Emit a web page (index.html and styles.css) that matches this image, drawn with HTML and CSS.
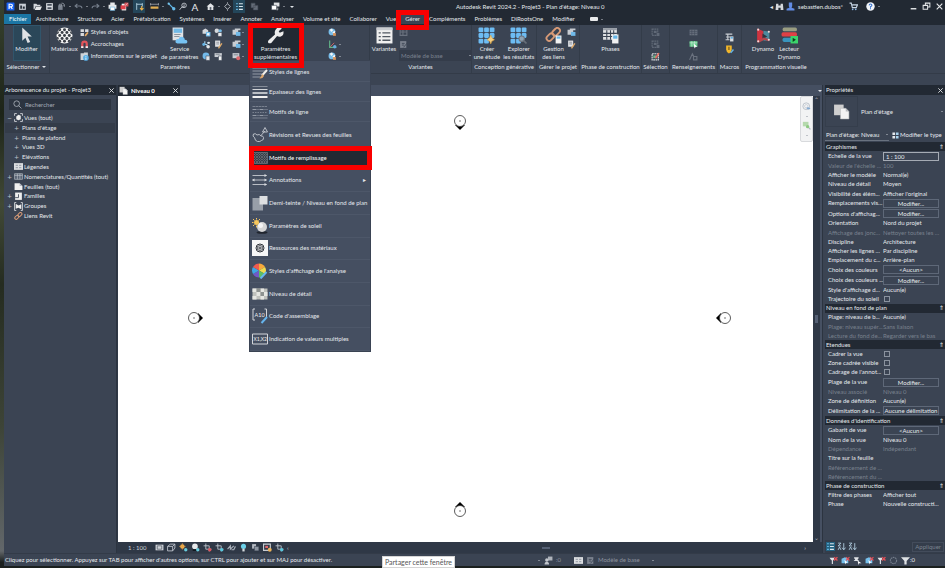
FILE: index.html
```html
<!DOCTYPE html>
<html lang="fr">
<head>
<meta charset="utf-8">
<title>Autodesk Revit 2024.2 - Projet3</title>
<link rel="stylesheet" href="styles.css">
</head>
<body>
<svg class="defs" aria-hidden="true">
  <symbol id="r" viewBox="0 0 16 16"><rect x="1" y="1" width="14" height="14" rx="1" fill="#1763f5"/><path d="M5.500 12.500V4h3.500a2.300 2.300 0 0 1 0 4.700H6M8.700 8.700l2.500 3.800" fill="none" stroke="#fff" stroke-width="2"/></symbol>
  <symbol id="win" viewBox="0 0 16 16"><path d="M2 3h12v11H2z" fill="#c9ced6"/><path d="M4 6h3v6H4zM8.500 8h3.500v4H8.500z" fill="#262e39"/></symbol>
  <symbol id="open" viewBox="0 0 16 16"><path d="M1 3h5l1.500 2H13v2H5l-2.500 6H1z" fill="#d4d7dc"/><path d="M5.500 8H16l-3 6H3z" fill="#e8e9eb"/></symbol>
  <symbol id="save" viewBox="0 0 16 16"><path d="M2 2h12v12H2z" fill="#d9dce0"/><path d="M4 3.500h8v3H4zM4.500 9.500h7v3h-7z" fill="#48505d"/></symbol>
  <symbol id="sync" viewBox="0 0 16 16"><path d="M2 6h8v8H2z" fill="#7a828e"/><path d="M8 2c4 0 6 2 5 6M13 8l-2-2M4 4h4v3H4z" stroke="#9299a4" stroke-width="1.500" fill="none"/></symbol>
  <symbol id="undo" viewBox="0 0 16 16"><path d="M3 7h7q4 0 4 4M6 3.500L2 7l4 3.500" fill="none" stroke="#747d8a" stroke-width="2"/></symbol>
  <symbol id="redo" viewBox="0 0 16 16"><path d="M13 7H6q-4 0-4 4M10 3.500L14 7l-4 3.500" fill="none" stroke="#747d8a" stroke-width="2"/></symbol>
  <symbol id="print" viewBox="0 0 16 16"><path d="M4 1h8v4H4zM1 5h14v7H1z" fill="#e6e8ea"/><path d="M4 9h8v6H4z" fill="#fff" stroke="#59a9dc"/></symbol>
  <symbol id="pdf" viewBox="0 0 16 16"><path d="M3 3h8v12H3z" fill="#f1f1f1"/><path d="M1 6h9v7H1z" fill="#e0404a"/><path d="M8 1h7v7H8z" fill="#d4525a"/><path d="M9.500 6l4-3.500" stroke="#fff"/></symbol>
  <symbol id="dim" viewBox="0 0 16 16"><path d="M3 2v12M13 2v6M3 4h10" fill="none" stroke="#b9d8e9" stroke-width="1.500"/><path d="M12 7v7M9 11l3 3 3-3" stroke="#f0b44c" stroke-width="2" fill="none"/></symbol>
  <symbol id="rule" viewBox="0 0 16 16"><path d="M1 4h14M1 2v4M15 2v4" stroke="#d7dadf"/><path d="M1 8h14v4H1z" fill="#e2ae53"/></symbol>
  <symbol id="tag" viewBox="0 0 16 16"><path d="M3 3l9 9" stroke="#60b7e6" stroke-width="2"/><circle cx="3" cy="3" r="2" fill="#79c7ef"/><circle cx="12" cy="12" r="3" fill="#68b9e7"/></symbol>
  <symbol id="pin" viewBox="0 0 16 16"><circle cx="9" cy="6" r="4" fill="none" stroke="#c8cdd4" stroke-width="1.500"/><path d="M9 4v5H5l-4 5" fill="none" stroke="#c8cdd4" stroke-width="1.500"/></symbol>
  <symbol id="house" viewBox="0 0 16 16"><path d="M1 8l7-6 7 6h-2v6H3V8z" fill="#e3e5e8"/><path d="M6.500 9h3v5h-3z" fill="#59616e"/></symbol>
  <symbol id="dia" viewBox="0 0 16 16"><path d="M8 3l5 5-5 5-5-5z" fill="none" stroke="#c8cdd4" stroke-width="1.500"/><path d="M8 0v3M8 13v3" stroke="#c8cdd4"/></symbol>
  <symbol id="lines" viewBox="0 0 16 16"><path d="M2 3h3M2 8h3M2 13h3" stroke="#69bce9" stroke-width="2"/><path d="M7 3h7M7 8h7M7 13h7" stroke="#d9e5ec" stroke-width="2"/></symbol>
  <symbol id="close2" viewBox="0 0 16 16"><path d="M2 2h7v8H2zM6 6h8v8H6z" fill="#646c78" stroke="#454d59"/></symbol>
  <symbol id="copy" viewBox="0 0 16 16"><path d="M2 2h7v8H2z" fill="#b9bec6"/><path d="M6 6h8v8H6z" fill="#8e96a2" stroke="#2f3846"/></symbol>
  <symbol id="wins" viewBox="0 0 16 16"><path d="M5 1h10v7H5z" fill="#dfe1e4"/><path d="M1 6h9v8H1z" fill="#fff" stroke="#38404c"/><path d="M12 10v4h-2" stroke="#fff" fill="none"/></symbol>
  <symbol id="bino" viewBox="0 0 16 16"><path d="M2 3h4v3h4V3h4l1 11h-5v-4H6v4H1z" fill="#d4d7dc"/></symbol>
  <symbol id="user" viewBox="0 0 16 16"><path d="M5 1h6v6l-1 3 5 2v3H1v-3l5-2-1-3z" fill="#628ce4"/></symbol>
  <symbol id="cart" viewBox="0 0 16 16"><path d="M1 2h3l2 8h7l2-5H5" fill="none" stroke="#c8d7e7" stroke-width="2"/><circle cx="6.500" cy="13" r="1.500" fill="#8cb6e4"/><circle cx="12" cy="13" r="1.500" fill="#8cb6e4"/></symbol>
  <symbol id="help" viewBox="0 0 16 16"><circle cx="8" cy="8" r="7.500" fill="#f0f4fa"/><path d="M5.500 6Q6 3.500 8 3.500t2.500 2.200Q10.500 7 8 8.500V10M8 11v2" fill="none" stroke="#2e6ccb" stroke-width="1.800"/></symbol>
  <symbol id="min" viewBox="0 0 16 16"><path d="M3 12h10" stroke="#e5e7e9" stroke-width="2.500"/></symbol>
  <symbol id="max" viewBox="0 0 16 16"><path d="M6 6V2h8v7h-4M2 6h8v7H2z" fill="none" stroke="#e5e7e9" stroke-width="1.800"/></symbol>
  <symbol id="x" viewBox="0 0 16 16"><path d="M3 3l10 10M13 3L3 13" stroke="#e5e7e9" stroke-width="2"/></symbol>
  <symbol id="cursor" viewBox="0 0 24 32"><path d="M4 1v25l6-6 4 10 5-2-5-10h8z" fill="#dfe1e4"/></symbol>
  <symbol id="mat" viewBox="0 0 32 32"><clipPath id="mc"><circle cx="16" cy="16" r="15"/></clipPath><g clip-path="url(#mc)"><path d="M0 0h32v32H0z" fill="#f4f4f4"/><g fill="#3a3f47"><circle cx="7" cy="5" r="2.800"/><circle cx="16" cy="5" r="2.800"/><circle cx="25" cy="5" r="2.800"/><circle cx="2.500" cy="10.500" r="2.800"/><circle cx="11.500" cy="10.500" r="2.800"/><circle cx="20.500" cy="10.500" r="2.800"/><circle cx="29.500" cy="10.500" r="2.800"/><circle cx="7" cy="16" r="2.800"/><circle cx="16" cy="16" r="2.800"/><circle cx="25" cy="16" r="2.800"/><circle cx="2.500" cy="21.500" r="2.800"/><circle cx="11.500" cy="21.500" r="2.800"/><circle cx="20.500" cy="21.500" r="2.800"/><circle cx="29.500" cy="21.500" r="2.800"/><circle cx="7" cy="27" r="2.800"/><circle cx="16" cy="27" r="2.800"/><circle cx="25" cy="27" r="2.800"/></g></g></symbol>
  <symbol id="obj" viewBox="0 0 16 16"><path d="M1 2h6v5H1zM9 2h6v5H9zM1 9h6v5H1z" fill="#d8dadd"/><path d="M14 8l-5 6" stroke="#e6aa62" stroke-width="3"/></symbol>
  <symbol id="magnet" viewBox="0 0 16 16"><path d="M4 14V7a4 4 0 0 1 8 0v7" fill="none" stroke="#e2545b" stroke-width="4"/><path d="M2 11h4v3H2zM10 11h4v3h-4z" fill="#f3f3f3"/></symbol>
  <symbol id="info" viewBox="0 0 16 16"><path d="M1 2h7v12H1zM7 1h7v6H7z" fill="#cfd3d8"/><circle cx="10.500" cy="10.500" r="5" fill="#5aaee4"/><path d="M10.500 7.500v1.500M10.500 10v4" stroke="#fff" stroke-width="1.500"/></symbol>
  <symbol id="cloud" viewBox="0 0 32 32"><path d="M3 1h20v24H3z" fill="#e1e3e6"/><path d="M5 3h16v8H5z" fill="#71b9e6"/><path d="M6 14h12M6 18h10" stroke="#8b929c" stroke-width="2"/><path d="M12 31q-5-1-3-6 2-3 5-2 2-6 8-4 4 1 4 5 5 0 5 4-1 3-4 3z" fill="#77c2f2"/></symbol>
  <symbol id="g1" viewBox="0 0 16 16"><path d="M1 4l5-3 5 3v6H1z" fill="#d5d8dc"/><path d="M7 7h8v8H7z" fill="#74bdea"/><path d="M9 9h4v4H9z" fill="#eef4f8"/></symbol>
  <symbol id="g2" viewBox="0 0 16 16"><circle cx="5" cy="5" r="4" fill="#d5d8dc"/><circle cx="11" cy="5" r="3" fill="#77bce8"/><path d="M7 8h7v7H7z" fill="#e9ebed" stroke="#3b4453"/></symbol>
  <symbol id="g3" viewBox="0 0 16 16"><path d="M5 2v6M2 8h7M9 5h4M9 8v5" stroke="#a8d5ef" stroke-width="2"/><circle cx="3" cy="8" r="2.500" fill="#67b6e8"/><circle cx="12" cy="5" r="2" fill="#e6e8ea"/><circle cx="11" cy="12" r="3" fill="#e6e8ea"/></symbol>
  <symbol id="g4" viewBox="0 0 16 16"><path d="M2 1h9v11H2z" fill="#e0e2e5"/><path d="M4 4h5M4 7h5" stroke="#59616e"/><path d="M14 6l-6 9" stroke="#dda969" stroke-width="2.500"/></symbol>
  <symbol id="g5" viewBox="0 0 16 16"><circle cx="7" cy="7" r="6" fill="#73baea"/><path d="M7 7h7v8H7z" fill="#e4e6e9" stroke="#3b4453"/></symbol>
  <symbol id="g6" viewBox="0 0 16 16"><path d="M1 2h13v7H1z" fill="#c8ccd2"/><path d="M8 7h6v8H8z" fill="#eef0f1" stroke="#3b4453"/><path d="M3 4h7" stroke="#4a5361"/></symbol>
  <symbol id="g7" viewBox="0 0 16 16"><path d="M1 3h10v9H1zM5 1h10v3H5z" fill="#c8ccd2"/><path d="M7 7h8v7H7z" fill="#70b9e8"/></symbol>
  <symbol id="g8" viewBox="0 0 16 16"><path d="M1 2h12v9H1z" fill="#c8ccd2"/><path d="M3 5h8" stroke="#4a5361"/><circle cx="11" cy="11" r="3.500" fill="#d9666c"/></symbol>
  <symbol id="wrench" viewBox="0 0 32 32"><path d="M19 2q6-2 9 1l-6 5 2 3 7-3q1 8-5 10-4 1-7-1L8 30q-4 2-6-1-1-3 2-5l11-10q-2-7 4-12z" fill="#ececec"/></symbol>
  <symbol id="globe" viewBox="0 0 16 16"><circle cx="7" cy="7" r="6" fill="#78bde9"/><path d="M3 3l4-2 2 3-3 3zM8 7l5-2-1 6H9z" fill="#f4f6f7"/><path d="M9 9h5v5H9z" fill="#d7955d"/></symbol>
  <symbol id="axes" viewBox="0 0 16 16"><path d="M3 1v12h12" fill="none" stroke="#62b789" stroke-width="2"/><path d="M4 12l7-7" stroke="#e46767" stroke-width="1.500"/><circle cx="12" cy="12" r="3" fill="#67aee1"/></symbol>
  <symbol id="variant" viewBox="0 0 32 32"><path d="M1 1h30v30H1z" fill="#f0f0f0"/><path d="M1 1h30v5H1z" fill="#c9ccd0"/><path d="M5 11h4M5 18h4M5 25h4M12 11h15M12 18h15M12 25h15" stroke="#515862" stroke-width="2.500"/></symbol>
  <symbol id="dimv" viewBox="0 0 16 16"><path d="M2 3h12v10H2z" fill="none" stroke="#69717e" stroke-width="2"/><path d="M2 7h12M7 3v10" stroke="#69717e" stroke-width="2"/></symbol>
  <symbol id="note" viewBox="0 0 16 16"><path d="M2 2h11v12H2z" fill="#7c838f"/><path d="M5 6h5M5 9h4M8 13l7-8" stroke="#3b4453" stroke-width="1.500"/></symbol>
  <symbol id="grid" viewBox="0 0 32 32"><g fill="#6dbcf3"><rect x="1" y="1" width="9" height="9" rx="2"/><rect x="11.500" y="1" width="9" height="9" rx="2"/><rect x="22" y="1" width="9" height="9" rx="2"/><rect x="1" y="11.500" width="9" height="9" rx="2"/><rect x="11.500" y="11.500" width="9" height="9" rx="2"/><rect x="22" y="11.500" width="9" height="9" rx="2"/><rect x="1" y="22" width="9" height="9" rx="2"/><rect x="11.500" y="22" width="9" height="9" rx="2"/></g></symbol>
  <symbol id="gen" viewBox="0 0 32 32"><use href="#grid" width="32" height="32"/><path d="M24 15l2 5 5 4-5 3-2 5-2-5-5-3 5-4z" fill="#f5cf83" stroke="#dca13c"/></symbol>
  <symbol id="explore" viewBox="0 0 32 32"><use href="#grid" width="32" height="32"/><circle cx="22" cy="22" r="5" fill="#8fa4b5" stroke="#6f7680" stroke-width="2"/><path d="M26 26l5 5" stroke="#666d78" stroke-width="3"/></symbol>
  <symbol id="link" viewBox="0 0 32 32"><g fill="none" stroke="#d79a77" stroke-width="3.500"><rect x="-8" y="-5" width="16" height="10" rx="5" transform="translate(10 19) rotate(-45)"/><rect x="-8" y="-5" width="16" height="10" rx="5" transform="translate(21 9) rotate(-45)"/></g></symbol>
  <symbol id="links" viewBox="0 0 32 32"><use href="#link" width="32" height="32"/><path d="M20 16h11v15H20z" fill="#f1f1f1"/><path d="M22 18h7v4h-7z" fill="#65b5e8"/></symbol>
  <symbol id="phases" viewBox="0 0 32 32"><path d="M2 2h26v22H2z" fill="#dfe1e4"/><path d="M2 2h26v4H2z" fill="#979da6"/><path d="M2 12h26M2 18h26M9 6v18M16 6v18M22 6v18" stroke="#3b4453" stroke-width="2"/><path d="M19 14h12v17H19z" fill="#f1f1f1"/><path d="M21 16h8v6h-8z" fill="#65b5e8"/></symbol>
  <symbol id="selg" viewBox="0 0 16 16"><path d="M2 2h10v11H2z" fill="none" stroke="#606977" stroke-width="2" stroke-dasharray="3 1"/><path d="M5 5h5v4H5zM10 9h5v5h-5z" fill="#606977"/></symbol>
  <symbol id="sele" viewBox="0 0 16 16"><path d="M2 3h11v11H2z" fill="none" stroke="#dfe1e4" stroke-width="2" stroke-dasharray="3 1"/><path d="M4 6h5v5H4z" fill="#6eb58a"/><path d="M14 2L8 11" stroke="#e46d62" stroke-width="3"/></symbol>
  <symbol id="table" viewBox="0 0 16 16"><path d="M1 3h14v10H1z" fill="#69717e"/><path d="M1 6h14M1 9.500h14M5 3v10M10 3v10" stroke="#3f4857"/></symbol>
  <symbol id="warn" viewBox="0 0 16 16"><path d="M1 14L6 3l3 6M8 8h6v6H8z" fill="none" stroke="#69717e" stroke-width="2"/></symbol>
  <symbol id="green" viewBox="0 0 16 16"><path d="M1 2h14v10H1z" fill="#63c78a"/><path d="M1 5h14M5 2v10M10 2v10" stroke="#d9f3e2"/><path d="M8 6l7 6-3 0-2 3z" fill="#fff"/></symbol>
  <symbol id="macro" viewBox="0 0 16 16"><path d="M1 2h12M2 7h7M1 12h7M5 2v10" stroke="#c9cdd3" stroke-width="2"/><path d="M9 6h6v9H9z" fill="#d9dcdf"/><path d="M10 7h4v3h-4z" fill="#61aee0"/></symbol>
  <symbol id="shield" viewBox="0 0 16 16"><path d="M2 1h10v7q0 4-5 7Q2 12 2 8z" fill="#f2b72c"/><path d="M7 3v6" stroke="#69501a" stroke-width="2"/><path d="M15 8l-5 6" stroke="#65b5e8" stroke-width="2.500"/></symbol>
  <symbol id="dyn" viewBox="0 0 32 32"><path d="M4 3l12 5v16L4 29z" fill="#cf3440"/><path d="M16 7l11 2v16l-11 1z" fill="#4c8b9e"/><path d="M14 12l9 6-9 5z" fill="#2f3542"/><path d="M6 28l11-6 10 3" stroke="#b1464c" stroke-width="4" fill="none"/><g fill="#f1d9d9"><circle cx="6" cy="5" r="2"/><circle cx="6" cy="27" r="2"/><circle cx="26" cy="9" r="2"/><circle cx="26" cy="24" r="2"/></g></symbol>
  <symbol id="lect" viewBox="0 0 32 32"><rect x="3" y="1" width="27" height="7" rx="3" fill="#9a9d81"/><rect x="1" y="10" width="29" height="8" rx="3" fill="#df4146"/><rect x="3" y="20" width="20" height="8" rx="3" fill="#3994bd"/><path d="M18 17h14v14H18z" fill="#3bd46b"/><path d="M22 20l6 4-6 4z" fill="#0d3c1d"/></symbol>
  <symbol id="search" viewBox="0 0 16 16"><circle cx="6.500" cy="6.500" r="5" fill="none" stroke="#a8afb9" stroke-width="1.500"/><path d="M10 10l5 5" stroke="#a8afb9" stroke-width="1.500"/></symbol>
  <symbol id="views" viewBox="0 0 16 16"><path d="M1 5V1h4M11 1h4v4M15 11v4h-4M5 15H1v-4" fill="none" stroke="#d9dce0" stroke-width="1.500"/><path d="M4 6l4-3 4 2v6l-4 2-4-2z" fill="#eee"/></symbol>
  <symbol id="legend" viewBox="0 0 16 16"><path d="M0 2h16v12H0z" fill="#dcdee1"/><path d="M3 5h4v2H3zM9 5h4v2H9zM3 9h4v2H3zM9 9h4v2H9z" fill="#a1a7b0"/></symbol>
  <symbol id="etype" viewBox="0 0 16 16"><path d="M1 1h6v6H1zM1 9h6v6H1z" fill="#e6e8eb"/><path d="M9 1h6v6H9zM9 9h6v6H9z" fill="#a9d2ec"/></symbol>
  <symbol id="sched" viewBox="0 0 16 16"><path d="M1 3h14v10H1z" fill="#596373" stroke="#cbd0d6"/><path d="M1 6h14M6 3v10M10.500 3v10" stroke="#cbd0d6"/></symbol>
  <symbol id="sheet" viewBox="0 0 16 16"><path d="M1 2h9l5 5v7H1z" fill="#f0f0f0"/><path d="M10 2v5h5" fill="#aab0b9"/></symbol>
  <symbol id="fam" viewBox="0 0 16 16"><path d="M2 1h12v13H2z" fill="#eee"/><path d="M2 10h6V4" fill="none" stroke="#3b4453" stroke-width="1.500"/></symbol>
  <symbol id="group" viewBox="0 0 16 16"><path d="M4 1H1v14h3M12 1h3v14h-3" fill="none" stroke="#dfe1e4" stroke-width="1.500"/><path d="M3 3l5 3 5-2v9l-5-3-5 2z" fill="#eee"/></symbol>
  <symbol id="plan" viewBox="0 0 32 32"><path d="M2 3h18v20H2z" fill="#cfcfcf"/><path d="M14 10h10l6 6v14H14z" fill="#f3f3f3" stroke="#b3b5b8"/><path d="M24 10v6h6" fill="#b9bbbe"/></symbol>
  <symbol id="m1" viewBox="0 0 32 28"><path d="M1 6h29M1 12h25M1 18h21M1 24h16" stroke="#aeb4be" stroke-width="1.500"/><path d="M30 10L20 21" stroke="#f3f0ea" stroke-width="4"/><path d="M21 18l3 4q-3 6-9 5z" fill="#dca66d"/></symbol>
  <symbol id="m2" viewBox="0 0 32 28"><path d="M1 3h30" stroke="#c8ccd2"/><path d="M1 9h30" stroke="#d2d5d9" stroke-width="2"/><path d="M1 16h30" stroke="#e3e5e7" stroke-width="3"/><path d="M1 24h30" stroke="#f1f1f1" stroke-width="4"/></symbol>
  <symbol id="m3" viewBox="0 0 32 28"><path d="M1 3h30" stroke="#aeb4be" stroke-dasharray="5 1"/><path d="M1 9h30M1 21h30" stroke="#aeb4be" stroke-width="1.500" stroke-dasharray="8 2 2 2"/><path d="M1 15h30" stroke="#aeb4be" stroke-dasharray="3 2"/><path d="M1 26h30" stroke="#aeb4be"/></symbol>
  <symbol id="m4" viewBox="0 0 32 32"><path d="M3 14q-3 5 2 7 1 7 6 8 5 1 8-2 5-1 4-6-1-4-5-3-3-5-8-2-3-4-7-2z" fill="none" stroke="#c5c9d0" stroke-width="1.800"/><path d="M17 18l9-10M26 1l5 9H21z" fill="none" stroke="#c5c9d0" stroke-width="1.800"/></symbol>
  <symbol id="m5" viewBox="0 0 32 24"><pattern id="hp" width="5" height="5" patternUnits="userSpaceOnUse"><path d="M0 0l5 5M5 0L0 5" stroke="#959ca5" stroke-width="1"/></pattern><path d="M1 1h30v22H1z" fill="url(#hp)" stroke="#8a919b"/></symbol>
  <symbol id="m6" viewBox="0 0 32 28"><path d="M1 5h28M1 14h28M1 23h28" stroke="#c6cad0" stroke-width="1.800"/><path d="M25 2l5 3-5 3zM5 11l-5 3 5 3zM25 11l5 3-5 3zM25 20l5 3-5 3z" fill="#d9dce0"/></symbol>
  <symbol id="m7" viewBox="0 0 32 32"><path d="M1 6h21v25H1z" fill="#989fa9"/><path d="M15 2h16v17H15z" fill="#dddfe1"/></symbol>
  <symbol id="m8" viewBox="0 0 32 32"><ellipse cx="20" cy="29" rx="11" ry="2.500" fill="#20252e"/><circle cx="20" cy="18" r="10" fill="#d6d6d6"/><circle cx="17" cy="15" r="5" fill="#f5f5f5"/><circle cx="9" cy="9" r="5" fill="#f6c75d"/><path d="M9 0v3M9 15v4M0 9h3M2 2l3 3M16 2l-3 3M2 16l3-3" stroke="#f4c55f" stroke-width="2"/></symbol>
  <symbol id="m9" viewBox="0 0 32 32"><path d="M0 0h32v32H0z" fill="#f7f7f7"/><circle cx="16" cy="16" r="8" fill="none" stroke="#2f3339" stroke-width="2"/><path d="M16 10l5 3v6l-5 3-5-3v-6zM16 10v12M11 13l10 6M21 13l-10 6" fill="none" stroke="#454a50" stroke-width="1.500"/></symbol>
  <symbol id="m10" viewBox="0 0 32 32"><g transform="translate(14 15)"><path d="M0 0V-14A14 14 0 0 1 12-7z" fill="#f7a93b"/><path d="M0 0L12-7A14 14 0 0 1 12 7z" fill="#f0dc4e"/><path d="M0 0L12 7A14 14 0 0 1 0 14z" fill="#5fbf62"/><path d="M0 0V14A14 14 0 0 1-12 7z" fill="#7258c6"/><path d="M0 0L-12 7A14 14 0 0 1-12-7z" fill="#40a5e4"/><path d="M0 0L-12-7A14 14 0 0 1 0-14z" fill="#ef5b4f"/></g><path d="M29 18L17 31" stroke="#66b5ee" stroke-width="4"/></symbol>
  <symbol id="m11" viewBox="0 0 32 24"><path d="M1 1h30v22H1z" fill="#bfc1bd"/><path d="M1 1h8v7H1zM17 1h7v7h-7zM9 8h8v8H9zM24 8h7v8h-7zM1 16h8v7H1zM17 16h7v7h-7z" fill="#e5e6e2"/><path d="M9 1h8v7H9zM17 8h7v8h-7z" fill="#8d9290"/></symbol>
  <symbol id="wheel" viewBox="0 0 32 32"><circle cx="15" cy="15" r="12" fill="none" stroke="#b4bbc5" stroke-width="3"/><circle cx="15" cy="15" r="6" fill="none" stroke="#b9c0c9" stroke-width="2"/><path d="M15 21q7-5 15 2-6 8-15-2z" fill="#86aad0"/></symbol>
  <symbol id="zoomr" viewBox="0 0 32 32"><path d="M3 3h20v16H3z" fill="#b5d9ad"/><circle cx="20" cy="20" r="6" fill="#8cc981"/><path d="M24 24l6 6" stroke="#b1b6bc" stroke-width="4"/></symbol>
  <symbol id="elev" viewBox="0 0 18 18"><path d="M9 17l-5-5h10z" fill="#000"/><circle cx="9" cy="8" r="5.500" fill="#fff" stroke="#333" stroke-width=".8"/><path d="M8 8h2" stroke="#777"/></symbol>
  <symbol id="v1" viewBox="0 0 16 16"><path d="M1 3h14v10H1z" fill="#d0d4da"/><path d="M4 5h8v6H4z" fill="none" stroke="#333c49"/></symbol>
  <symbol id="v2" viewBox="0 0 16 16"><path d="M1 6l5-4h8v7l-4 5H1zM1 6h9v8M10 6l4-4" fill="none" stroke="#c4c9d1" stroke-width="1.500"/></symbol>
  <symbol id="v3" viewBox="0 0 16 16"><circle cx="6" cy="6" r="4" fill="#f1ad4b"/><path d="M6 0v12M0 6h12" stroke="#e3a148"/><circle cx="12" cy="12" r="3" fill="#69ccdd"/></symbol>
  <symbol id="v4" viewBox="0 0 16 16"><circle cx="7" cy="6" r="5" fill="#e6e8ea"/><path d="M3 11h8v3H3z" fill="#10141a"/><circle cx="12" cy="12" r="3" fill="#69ccdd"/></symbol>
  <symbol id="v5" viewBox="0 0 16 16"><path d="M5 1v10h10M1 5h10v10" fill="none" stroke="#c3c9d1" stroke-width="1.500"/><circle cx="12" cy="12" r="3" fill="#de555c"/></symbol>
  <symbol id="v6" viewBox="0 0 16 16"><path d="M5 1v10h10M1 5h10v10" fill="none" stroke="#c3c9d1" stroke-width="1.500"/><circle cx="12" cy="12" r="3" fill="#59c7de"/></symbol>
  <symbol id="v7" viewBox="0 0 16 16"><path d="M1 11l5-6v6l6-6M8 12h4l3-6" fill="none" stroke="#aab1bc" stroke-width="2"/></symbol>
  <symbol id="v8" viewBox="0 0 16 16"><circle cx="8" cy="6" r="4.500" fill="#6bd1e9"/><path d="M6 10h4v5H6z" fill="#d5dade"/></symbol>
  <symbol id="v9" viewBox="0 0 16 16"><path d="M1 2h12v11H1z" fill="none" stroke="#c8ccd2" stroke-width="2"/><path d="M4 5h5v4H4z" fill="#e2666c"/><circle cx="12" cy="12" r="3.500" fill="#edb35a"/></symbol>
  <symbol id="s1" viewBox="0 0 16 16"><path d="M1 3h8v3l-2 2v6H5V8L3 6z" fill="#dfe2e6"/><path d="M9 2l6 6M15 2L9 8" stroke="#e25058" stroke-width="2.500"/></symbol>
  <symbol id="s2" viewBox="0 0 16 16"><path d="M1 5l6-3 6 3v8H1z" fill="#76bfea"/><path d="M6 7l6 5H9l-1 3z" fill="#fff"/><path d="M9 2l6 6M15 2L9 8" stroke="#e25058" stroke-width="2"/></symbol>
  <symbol id="s3" viewBox="0 0 16 16"><path d="M2 2h8v2L8 6l3 3H1l3-3-2-2z" fill="#dfe2e6"/><path d="M8 8l7 5h-4l-1 3z" fill="#fff"/></symbol>
  <symbol id="gear" viewBox="0 0 16 16"><circle cx="8" cy="8" r="5.500" fill="none" stroke="#737c8a" stroke-width="2" stroke-dasharray="3 1"/></symbol>
  <symbol id="filter" viewBox="0 0 16 16"><path d="M0 2h16l-6 7v6H6V9z" fill="#dfe2e5"/></symbol>
  <symbol id="team" viewBox="0 0 16 16"><path d="M7 1h8v7H7z" fill="#aeb3bb"/><circle cx="5" cy="7" r="3" fill="#c1c5cb"/><path d="M1 15q0-5 4-5t4 5z" fill="#c1c5cb"/></symbol>
  <symbol id="sort" viewBox="0 0 16 16"><path d="M2 2h5L2 7h5M2 14l2.500-5L7 14M12 2v11M9 10l3 4 3-4" fill="none" stroke="#b8d6e9" stroke-width="1.500"/></symbol>
</svg>

<div class="app">
  <header class="titlebar">
    <div class="quick">
      <button aria-label="Revit"><svg><use href="#r"/></svg></button><button aria-label="Accueil"><svg><use href="#win"/></svg></button><i></i><button aria-label="Ouvrir"><svg><use href="#open"/></svg></button><button aria-label="Enregistrer"><svg><use href="#save"/></svg></button><button aria-label="Synchroniser"><svg><use href="#sync"/></svg></button><b></b><button aria-label="Annuler"><svg><use href="#undo"/></svg></button><b></b><button aria-label="Rétablir"><svg><use href="#redo"/></svg></button><b></b><button aria-label="Imprimer"><svg><use href="#print"/></svg></button><button aria-label="PDF"><svg><use href="#pdf"/></svg></button><i></i><button class="on" aria-label="Cote"><svg><use href="#dim"/></svg></button><i></i><button aria-label="Mesurer"><svg><use href="#rule"/></svg></button><b></b><button aria-label="Aligner"><svg><use href="#tag"/></svg></button><button aria-label="Étiquette"><svg><use href="#pin"/></svg></button><button class="letter">A</button><i></i><button aria-label="Vue 3D"><svg><use href="#house"/></svg></button><b></b><button aria-label="Coupe"><svg><use href="#dia"/></svg></button><button class="on" aria-label="Lignes fines"><svg><use href="#lines"/></svg></button><i></i><button aria-label="Fermer les vues"><svg><use href="#close2"/></svg></button><i></i><i></i><i></i><button aria-label="Changer de fenêtre"><svg><use href="#wins"/></svg></button><b></b><i></i><b class="big"></b>
    </div>
    <h1>Autodesk Revit 2024.2 - Projet3 - Plan d'étage: Niveau 0</h1>
    <div class="account">
      <span>◂</span><button aria-label="Rechercher"><svg><use href="#bino"/></svg></button><button class="name"><svg><use href="#user"/></svg>sebastien.dubos*</button><button aria-label="Boutique"><svg><use href="#cart"/></svg></button><button class="helpb" aria-label="Aide"><svg><use href="#help"/></svg></button><b></b>
    </div>
    <div class="winbtns"><button aria-label="Réduire"><svg><use href="#min"/></svg></button><button aria-label="Restaurer"><svg><use href="#max"/></svg></button><button aria-label="Fermer"><svg><use href="#x"/></svg></button></div>
  </header>

  <nav class="tabs">
    <a class="file" href="#">Fichier</a><a href="#">Architecture</a><a href="#">Structure</a><a href="#">Acier</a><a href="#">Préfabrication</a><a href="#">Systèmes</a><a href="#">Insérer</a><a href="#">Annoter</a><a href="#">Analyser</a><a href="#">Volume et site</a><a href="#">Collaborer</a><a href="#">Vue</a><a class="current" href="#">Gérer</a><a href="#">Compléments</a><a href="#">Problèmes</a><a href="#">DiRootsOne</a><a href="#">Modifier</a><button class="toggle" aria-label="Ruban"></button><b></b>
  </nav>

  <section class="ribbon">
    <div class="group"><div class="tools"><button class="large active"><svg><use href="#cursor"/></svg>Modifier</button></div><h2>Sélectionner <b class="big"></b></h2></div>
    <div class="group">
      <div class="tools params">
        <button class="large"><svg><use href="#mat"/></svg>Matériaux</button>
        <div class="stack"><button><svg><use href="#obj"/></svg>Styles d'objets</button><button><svg><use href="#magnet"/></svg>Accrochages</button><button><svg><use href="#info"/></svg>Informations sur le projet</button></div>
        <button class="large service"><svg><use href="#cloud"/></svg>Service<br>de paramètres</button>
        <div class="minis two"><button aria-label="Paramètres du projet"><svg><use href="#g1"/></svg></button><button aria-label="Paramètres globaux"><svg><use href="#g2"/></svg></button><button aria-label="Paramètres partagés"><svg><use href="#g3"/></svg></button><button aria-label="Purger"><svg><use href="#g4"/></svg></button><button aria-label="Transférer"><svg><use href="#g5"/></svg></button><button aria-label="Unités"><svg><use href="#g6"/></svg></button></div>
        <div class="minis one"><button aria-label="Structure"><svg><use href="#g7"/></svg><b></b></button><button aria-label="MEP"><svg><use href="#g7"/></svg><b></b></button><button aria-label="Gabarits"><svg><use href="#g8"/></svg><b></b></button></div>
        <div class="dropdown">
          <button class="large pressed"><svg><use href="#wrench"/></svg>Paramètres<br>supplémentaires</button>
          <div class="menu">
            <div class="menu-top">
              <button><svg><use href="#m1"/></svg>Styles de lignes</button>
              <button><svg><use href="#m2"/></svg>Epaisseur des lignes</button>
              <button><svg><use href="#m3"/></svg>Motifs de ligne</button>
            </div>
            <div class="menu-rest">
              <button><svg><use href="#m4"/></svg>Révisions et Revues des feuilles</button>
              <button class="chosen"><svg><use href="#m5"/></svg>Motifs de remplissage</button>
              <button><svg><use href="#m6"/></svg>Annotations<span class="sub">▸</span></button>
              <button><svg><use href="#m7"/></svg>Demi-teinte / Niveau en fond de plan</button>
              <button><svg><use href="#m8"/></svg>Paramètres de soleil</button>
              <button><svg><use href="#m9"/></svg>Ressources des matériaux</button>
              <button><svg><use href="#m10"/></svg>Styles d'affichage de l'analyse</button>
              <button><svg><use href="#m11"/></svg>Niveau de détail</button>
              <button><svg viewBox="0 0 32 32"><path d="M6 2H2v22h4M25 2h4v16" fill="none" stroke="#d3d6db" stroke-width="2"/><text x="5" y="17" font-size="11" fill="#eee">A10</text><path d="M30 18L19 30" stroke="#66b5ee" stroke-width="4"/></svg>Code d'assemblage</button>
              <button><svg viewBox="0 0 32 22"><path d="M1 1h30v20H1z" fill="none" stroke="#d3d6db" stroke-width="2"/><text x="3" y="15" font-size="10" fill="#eee">X1,X2</text></svg>Indication de valeurs multiples</button>
            </div>
          </div>
        </div>
      </div>
      <h2>Paramètres</h2>
    </div>
    <div class="group"><div class="tools"><div class="minis one"><button aria-label="Emplacement"><svg><use href="#globe"/></svg></button><button aria-label="Coordonnées"><svg><use href="#axes"/></svg><b></b></button><button aria-label="Position"><svg><use href="#globe"/></svg><b></b></button></div></div></div>
    <div class="group"><div class="tools variants"><button class="large"><svg><use href="#variant"/></svg>Variantes</button><div class="stack"><button aria-label="Ajouter"><svg><use href="#dimv"/></svg></button><button aria-label="Choisir"><svg><use href="#note"/></svg></button><div class="pick"><select aria-label="Variante active" disabled><option>Modèle de base</option></select><b></b></div></div></div><h2>Variantes</h2></div>
    <div class="group"><div class="tools pair"><button class="large"><svg><use href="#gen"/></svg>Créer<br>une étude</button><button class="large"><svg><use href="#explore"/></svg>Explorer<br>les résultats</button></div><h2>Conception générative</h2></div>
    <div class="group"><div class="tools"><button class="large"><svg><use href="#links"/></svg>Gestion<br>des liens</button><div class="minis one"><button aria-label="Vignettes"><svg><use href="#g7"/></svg></button><button aria-label="Vue de départ"><svg><use href="#g4"/></svg></button></div></div><h2>Gérer le projet</h2></div>
    <div class="group"><div class="tools"><button class="large"><svg><use href="#phases"/></svg>Phases</button></div><h2>Phase de construction</h2></div>
    <div class="group"><div class="tools"><div class="minis one"><button aria-label="Enregistrer la sélection"><svg><use href="#selg"/></svg></button><button aria-label="Charger la sélection"><svg><use href="#selg"/></svg></button><button aria-label="Modifier la sélection"><svg><use href="#sele"/></svg></button></div></div><h2>Sélection</h2></div>
    <div class="group"><div class="tools"><div class="minis one"><button aria-label="Identifiants"><svg><use href="#table"/></svg></button><button aria-label="Sélectionner par ID"><svg><use href="#green"/></svg></button><button aria-label="Avertissements"><svg><use href="#warn"/></svg></button></div></div><h2>Renseignements</h2></div>
    <div class="group"><div class="tools"><div class="minis one low"><button aria-label="Gestionnaire de macros"><svg><use href="#macro"/></svg></button><button aria-label="Sécurité des macros"><svg><use href="#shield"/></svg></button></div></div><h2>Macros</h2></div>
    <div class="group"><div class="tools"><button class="large"><svg><use href="#dyn"/></svg>Dynamo</button><button class="large"><svg><use href="#lect"/></svg>Lecteur<br>Dynamo</button></div><h2>Programmation visuelle</h2></div>
  </section>

  <div class="options"></div>

  <main class="work">
    <aside class="browser">
      <div class="panel-title"><h2>Arborescence du projet - Projet3</h2><button aria-label="Fermer"><svg><use href="#x"/></svg></button></div>
      <label class="search"><svg><use href="#search"/></svg><input type="text" placeholder="Rechercher" aria-label="Rechercher"></label>
      <ul class="tree">
        <li><span>−</span><svg><use href="#views"/></svg>Vues (tout)</li>
        <li class="child sel"><span>+</span>Plans d'étage</li>
        <li class="child"><span>+</span>Plans de plafond</li>
        <li class="child"><span>+</span>Vues 3D</li>
        <li class="child"><span>+</span>Elévations</li>
        <li><span></span><svg><use href="#legend"/></svg>Légendes</li>
        <li><span>+</span><svg><use href="#sched"/></svg>Nomenclatures/Quantités (tout)</li>
        <li><span></span><svg><use href="#sheet"/></svg>Feuilles (tout)</li>
        <li><span>+</span><svg><use href="#fam"/></svg>Familles</li>
        <li><span>+</span><svg><use href="#group"/></svg>Groupes</li>
        <li><span></span><svg><use href="#link"/></svg>Liens Revit</li>
      </ul>
    </aside>

    <section class="view">
      <div class="viewtabs"><div class="viewtab"><svg><use href="#plan"/></svg>Niveau 0<button aria-label="Fermer la vue"><svg><use href="#x"/></svg></button></div><b class="big"></b></div>
      <div class="stage">
        <div class="canvas">
          <svg class="mark north"><use href="#elev"/></svg>
          <svg class="mark west"><use href="#elev"/></svg>
          <svg class="mark east"><use href="#elev"/></svg>
          <svg class="mark south"><use href="#elev"/></svg>
          <div class="navbar"><button aria-label="Disque de navigation"><svg><use href="#wheel"/></svg></button><b></b><button aria-label="Zoom région"><svg><use href="#zoomr"/></svg></button><b></b></div>
        </div>
        <div class="vscroll"><span>⌃</span><i></i><span>⌄</span></div>
      </div>
      <div class="viewbar">
        <span class="scale">1 : 100</span><button aria-label="Niveau de détail"><svg><use href="#v1"/></svg></button><button aria-label="Style visuel"><svg><use href="#v2"/></svg></button><button aria-label="Soleil"><svg><use href="#v3"/></svg></button><button aria-label="Ombres"><svg><use href="#v4"/></svg></button><button aria-label="Cadrer"><svg><use href="#v5"/></svg></button><button aria-label="Afficher le cadrage"><svg><use href="#v6"/></svg></button><button aria-label="Masquer"><svg><use href="#v7"/></svg></button><button aria-label="Révéler"><svg><use href="#v8"/></svg></button><button aria-label="Propriétés temporaires"><svg><use href="#copy"/></svg></button><button aria-label="Analyse"><svg><use href="#v9"/></svg></button><button aria-label="Contraintes"><svg><use href="#v6"/></svg></button><span>‹</span><i class="hthumb"></i><span class="next">›</span>
      </div>
    </section>

    <aside class="props">
      <div class="panel-title"><h2>Propriétés</h2><button aria-label="Fermer"><svg><use href="#x"/></svg></button></div>
      <button class="type"><span><svg><use href="#plan"/></svg></span>Plan d'étage<b></b></button>
      <div class="instance"><div class="pick"><select aria-label="Instance"><option>Plan d'étage: Niveau</option></select><b></b></div><button><svg><use href="#etype"/></svg>Modifier le type</button></div>
      <table>
        <colgroup><col class="names"><col></colgroup>
        <tbody>
        <tr class="head"><th colspan="2">Graphismes<span>⇑</span></th></tr>
        <tr><td>Echelle de la vue</td><td><input type="text" value="1 : 100" aria-label="Echelle de la vue"></td></tr>
        <tr class="off"><td>Valeur de l'échelle ...</td><td>100</td></tr>
        <tr><td>Afficher le modèle</td><td>Normal(e)</td></tr>
        <tr><td>Niveau de détail</td><td>Moyen</td></tr>
        <tr><td>Visibilité des élém...</td><td>Afficher l'original</td></tr>
        <tr><td>Remplacements vis...</td><td><button>Modifier...</button></td></tr>
        <tr><td>Options d'affichag...</td><td><button>Modifier...</button></td></tr>
        <tr><td>Orientation</td><td>Nord du projet</td></tr>
        <tr class="off"><td>Affichage des jonc...</td><td>Nettoyer toutes les ...</td></tr>
        <tr><td>Discipline</td><td>Architecture</td></tr>
        <tr><td>Afficher les lignes ...</td><td>Par discipline</td></tr>
        <tr><td>Emplacement du c...</td><td>Arrière-plan</td></tr>
        <tr><td>Choix des couleurs</td><td><button>&lt;Aucun&gt;</button></td></tr>
        <tr><td>Choix des couleurs ...</td><td><button>Modifier...</button></td></tr>
        <tr><td>Style d'affichage d...</td><td>Aucun(e)</td></tr>
        <tr><td><label for="sun">Trajectoire du soleil</label></td><td><input type="checkbox" id="sun"></td></tr>
        <tr class="head"><th colspan="2">Niveau en fond de plan<span>⇑</span></th></tr>
        <tr><td>Plage: niveau de b...</td><td>Aucun(e)</td></tr>
        <tr class="off"><td>Plage: niveau supér...</td><td>Sans liaison</td></tr>
        <tr class="off"><td>Lecture du fond de...</td><td>Regarder vers le bas</td></tr>
        <tr class="head"><th colspan="2">Etendues<span>⇑</span></th></tr>
        <tr><td><label for="crop">Cadrer la vue</label></td><td><input type="checkbox" id="crop"></td></tr>
        <tr><td><label for="zone">Zone cadrée visible</label></td><td><input type="checkbox" id="zone"></td></tr>
        <tr><td><label for="anno">Cadrage de l'annot...</label></td><td><input type="checkbox" id="anno"></td></tr>
        <tr><td>Plage de la vue</td><td><button>Modifier...</button></td></tr>
        <tr class="off"><td>Niveau associé</td><td>Niveau 0</td></tr>
        <tr><td>Zone de définition</td><td>Aucun(e)</td></tr>
        <tr><td>Délimitation de la ...</td><td><button>Aucune délimitation</button></td></tr>
        <tr class="head"><th colspan="2">Données d'identification<span>⇑</span></th></tr>
        <tr><td>Gabarit de vue</td><td><button>&lt;Aucun&gt;</button></td></tr>
        <tr><td>Nom de la vue</td><td>Niveau 0</td></tr>
        <tr class="off"><td>Dépendance</td><td>Indépendant</td></tr>
        <tr><td>Titre sur la feuille</td><td></td></tr>
        <tr class="off"><td>Référencement de ...</td><td></td></tr>
        <tr class="off"><td>Référencement du ...</td><td></td></tr>
        <tr class="head"><th colspan="2">Phase de construction<span>⇑</span></th></tr>
        <tr><td>Filtre des phases</td><td>Afficher tout</td></tr>
        <tr><td>Phase</td><td>Nouvelle constructi...</td></tr>
        </tbody>
      </table>
      <div class="props-foot"><button class="on" aria-label="Grouper"><svg><use href="#lines"/></svg></button><button aria-label="Tri croissant"><svg><use href="#sort"/></svg></button><button aria-label="Tri décroissant"><svg><use href="#sort"/></svg></button><button class="apply" disabled>Appliquer</button></div>
    </aside>
  </main>

  <footer class="status">
    <p>Cliquez pour sélectionner. Appuyez sur TAB pour afficher d'autres options, sur CTRL pour ajouter et sur MAJ pour désactiver.</p>
    <div class="sets"><b></b><svg><use href="#team"/></svg>:0<svg class="gap"><use href="#legend"/></svg><svg><use href="#note"/></svg><span>Modèle de base</span><b class="far"></b></div>
    <div class="selects"><svg><use href="#s1"/></svg><svg><use href="#s2"/></svg><svg><use href="#s3"/></svg><svg><use href="#s2"/></svg><svg><use href="#s1"/></svg><svg><use href="#gear"/></svg><span><svg><use href="#filter"/></svg>:0</span></div>
    <div class="tooltip" role="tooltip">Partager cette fenêtre</div>
  </footer>
</div>
</body>
</html>
```
FILE: styles.css
```css
* { box-sizing: border-box; }
body {
  margin: 0;
  min-height: 100vh;
  padding: 0 0 2px 4px;
  display: flex;
  background: linear-gradient(#39432f, #1d2419 20%, #414936 36%, #252c20 50%, #3d4437 75%, #62676a 97%, #1b201f 99%);
  color: #e6e9ed;
  font: 6px/8px Lato, "Noto Sans", sans-serif;
}
.defs { position: absolute; width: 0; height: 0; }
button, input, select {
  margin: 0; padding: 0; border: 0; background: none;
  color: inherit; font: inherit; border-radius: 0;
}
h1, h2, p, ul { margin: 0; padding: 0; font: inherit; list-style: none; }
a { color: inherit; text-decoration: none; }
svg { width: 9px; height: 9px; display: block; flex: none; }
b { flex: none; width: 5px; display: grid; place-items: center; }
b::before { content: ""; border: 1px solid transparent; border-top: 1px solid #c7ccd3; border-bottom: 0; }
b.big::before { border-width: 2px; border-top: 2px solid #e0e3e7; border-bottom: 0; }

.app { flex: 1; display: flex; flex-direction: column; min-width: 0; background: #3b4453; }

.titlebar { height: 13px; display: flex; align-items: center; background: #222933; }
.titlebar button { width: 12px; height: 13px; display: grid; place-items: center; }
.titlebar .on { background: #24465a; }
.quick { display: flex; width: 452px; }
.quick i { width: 3px; }
.quick .letter { font-size: 10px; line-height: 12px; }
.account { margin-left: auto; display: flex; align-items: center; }
.account .name { width: auto; display: flex; align-items: center; gap: 3px; padding: 0 4px 0 1px; }
.account .helpb { margin-left: 5px; }
.winbtns { display: flex; margin-left: 26px; gap: 1px; }

.tabs { height: 12px; display: flex; align-items: center; background: #222933; line-height: 10px; }
.tabs a { padding: 0 4px 0 5px; position: relative; }
.tabs .file { background: #1b76a4; color: #fff; }
.tabs .current { background: #3b4453; }
.tabs .current::after {
  content: ""; position: absolute; z-index: 6; inset: -4px -5px -6px -4px; border: 5px solid #f80000;
}
.toggle { width: 8px; height: 4px; margin: 0 2px 0 11px; background: #e8e9eb; border-radius: 1px; }

.ribbon {
  height: 48px; display: grid; overflow: visible;
  grid-template-columns: 46px 251px 69px 102px 65px 43px 62px 28px 48px 24px 68px;
}
.group { display: flex; flex-direction: column; border-right: 1px solid #333c49; min-width: 0; }
.group:last-child { border-right: 0; }
.group h2 { text-align: center; white-space: nowrap; display: flex; justify-content: center; gap: 2px; }
.tools { height: 38px; display: flex; justify-content: center; padding-top: 1px; }
.pair { gap: 3px; }
.large {
  display: flex; flex-direction: column; align-items: center; justify-content: flex-start;
  padding: 1px 0 0; line-height: 8px; white-space: nowrap; min-width: 26px;
}
.large svg { width: 17px; height: 17px; margin-bottom: 1px; }
.active { background: #2b4759; outline: 1px solid #31556b; height: 34px; }
.params { justify-content: flex-start; padding-left: 1px; }
.stack { display: flex; flex-direction: column; }
.stack > button { display: flex; align-items: center; gap: 2px; height: 12px; white-space: nowrap; }
.params .stack { margin-left: 2px; width: 80px; }
.service { width: 40px; }
.minis { display: grid; grid-auto-rows: 12px; align-items: center; align-content: start; }
.minis button { display: flex; align-items: center; }
.minis.two { grid-template-columns: 12px 12px; margin: 0 6px 0 2px; }
.minis.low { padding-top: 5px; }
.dropdown { position: relative; margin-left: auto; width: 49px; height: 37px; }
.pressed { width: 100%; height: 37px; background: #222933; }
.dropdown::after { content: ""; position: absolute; z-index: 6; inset: -3px -4px -5px -3px; border: 5px solid #f80000; }
.pick { display: flex; align-items: center; }
.variants { gap: 2px; justify-content: flex-start; padding-left: 1px; }
.variants .pick { background: #343c4a; width: 73px; }
.variants select { flex: 1; min-width: 0; height: 11px; padding: 0 2px; appearance: none; color: #7a828f; opacity: 1; }

.menu {
  position: absolute; z-index: 5; top: 34px; left: -2px; width: 122px;
  background: #454f61; border: 1px solid #3a4353; padding-top: 1px;
}
.menu-top { display: grid; grid-auto-rows: 20px; padding-bottom: 2px; }
.menu-rest { display: grid; grid-template-columns: minmax(0, 1fr); height: 227px; grid-auto-rows: 1fr; }
.menu button {
  display: flex; align-items: center; gap: 1px; padding: 0 2px; white-space: nowrap;
  position: relative; border-bottom: 1px solid #4d5769;
}
.menu svg { width: 16px; height: 16px; }
.menu .chosen { background: #222933; color: #fff; }
.menu .chosen::after { content: ""; position: absolute; inset: -1px -2px -2px -1px; border: 5px solid #f80000; }
.sub { margin-left: auto; padding-right: 2px; }

.options { height: 12px; border-top: 1px solid #333b48; }

.work { flex: 1; display: flex; min-height: 0; }
.panel-title { height: 10px; display: flex; justify-content: space-between; align-items: center; background: #222933; padding: 0 1px; }
.panel-title svg { width: 7px; height: 7px; }
.browser { width: 113px; border-right: 1px solid #2c3440; }
.search { display: flex; align-items: center; gap: 3px; height: 11px; margin: 4px 5px 3px; padding: 0 4px; background: #2c3440; }
.search input { flex: 1; min-width: 0; }
.search input::placeholder { color: #a4abb6; opacity: 1; }
.tree { display: grid; grid-auto-rows: 1fr; height: 108px; margin: 0 1px; }
.tree li { display: flex; align-items: center; gap: 1px; padding-left: 1px; white-space: nowrap; }
.tree span { width: 7px; text-align: center; color: #b8bec7; font-size: 8px; }
.tree .child { padding-left: 8px; gap: 2px; }
.tree .sel { background: #343c49; }

.view { flex: 1; min-width: 0; display: flex; flex-direction: column; background: #2f3846; padding-left: 1px; }
.viewtabs { height: 11px; display: flex; justify-content: space-between; background: #454f61; }
.viewtab { width: 62px; display: flex; align-items: center; gap: 3px; padding: 0 1px; background: #222933; color: #fff; font-weight: 700; }
.viewtab button { margin-left: auto; }
.viewtab button svg { width: 7px; height: 7px; }
.stage { flex: 1; display: flex; min-height: 0; }
.canvas { flex: 1; position: relative; background: #fff; }
.mark { position: absolute; width: 18px; height: 18px; margin: -10px 0 0 -8px; }
.north { left: 49%; top: 6%; }
.west { left: 11%; top: 50%; transform: rotate(-90deg); }
.east { left: 87%; top: 50%; transform: rotate(90deg); }
.south { left: 49%; top: 93%; transform: rotate(180deg); }
.navbar {
  position: absolute; right: 0; top: 0; width: 13px; height: 46px; display: flex; flex-direction: column;
  justify-content: space-evenly; align-items: center; background: #f2f3f4; border: 1px solid #d8dadd; border-radius: 2px;
}
.navbar b::before { border-top-color: #8a919b; }
.vscroll { width: 9px; display: flex; flex-direction: column; align-items: center; justify-content: space-between; border-right: 2px solid #465062; color: #a6adb8; }
.vscroll i { width: 3px; height: 8px; background: #556074; }
.viewbar { height: 11px; display: flex; align-items: center; gap: 3px; color: #cdd2d9; }
.viewbar .scale { width: 34px; padding-left: 10px; }
.hthumb { width: 8px; height: 2px; margin: 0 auto; background: #556074; }
.viewbar .next { padding-right: 16px; }

.props { width: 123px; padding-left: 2px; display: flex; flex-direction: column; border-left: 1px solid #2c3440; }
.type { height: 33px; display: flex; align-items: center; gap: 3px; text-align: left; padding-right: 1px; }
.type span { width: 33px; height: 31px; display: grid; place-items: center; border: 1px solid #353e4c; }
.type span svg { width: 17px; height: 17px; }
.type b { margin-left: auto; }
.instance { height: 14px; display: flex; align-items: center; gap: 3px; white-space: nowrap; }
.instance .pick { width: 64px; border-bottom: 1px solid #69727f; }
.instance select { flex: 1; min-width: 0; height: 11px; padding-left: 1px; appearance: none; }
.instance button { display: flex; align-items: center; gap: 1px; }
.instance svg { width: 7px; height: 7px; }
.props table { border-collapse: collapse; width: 100%; height: 367px; table-layout: fixed; }
.names { width: 58px; }
.props th { background: #222933; text-align: left; font-weight: 400; padding: 0 1px; }
.props th span { float: right; }
.props td { padding: 0 0 0 3px; white-space: nowrap; overflow: hidden; line-height: 8px; }
.props td + td { padding: 0 6px 0 0; }
.props .off { color: #79818d; }
td button, td input[type="text"] { display: block; width: 100%; height: 9px; line-height: 7px; border: 1px solid #5e6878; text-align: center; }
td input[type="text"] { text-align: left; padding-left: 2px; border-color: #a5abb4; }
td input[type="checkbox"] { appearance: none; display: block; width: 6px; height: 6px; border: 1px solid #8a929e; margin-left: 1px; }
.props-foot { margin-top: auto; height: 13px; display: flex; align-items: center; gap: 2px; padding: 0 1px; background: #343d4b; }
.props-foot .on { background: #246382; }
.apply { margin-left: auto; padding: 0 2px; border: 1px solid #434c5b; color: #7c8490; }

.status { position: relative; height: 13px; display: flex; align-items: center; border-top: 1px solid #333b48; }
.status p { width: 532px; padding-left: 1px; white-space: nowrap; }
.sets, .selects { display: flex; align-items: center; gap: 3px; }
.sets { color: #8b929d; }
.sets .gap { margin-left: 10px; }
.sets .far { margin-left: 8px; }
.selects { margin-left: auto; padding-right: 30px; }
.selects span { display: flex; align-items: center; }
.tooltip {
  position: absolute; left: 378px; top: 2px; height: 12px; padding: 0 2px; line-height: 11px; font-size: 7px;
  background: #fff; color: #555; border: 1px solid #d5d5d5; white-space: nowrap;
}
```
